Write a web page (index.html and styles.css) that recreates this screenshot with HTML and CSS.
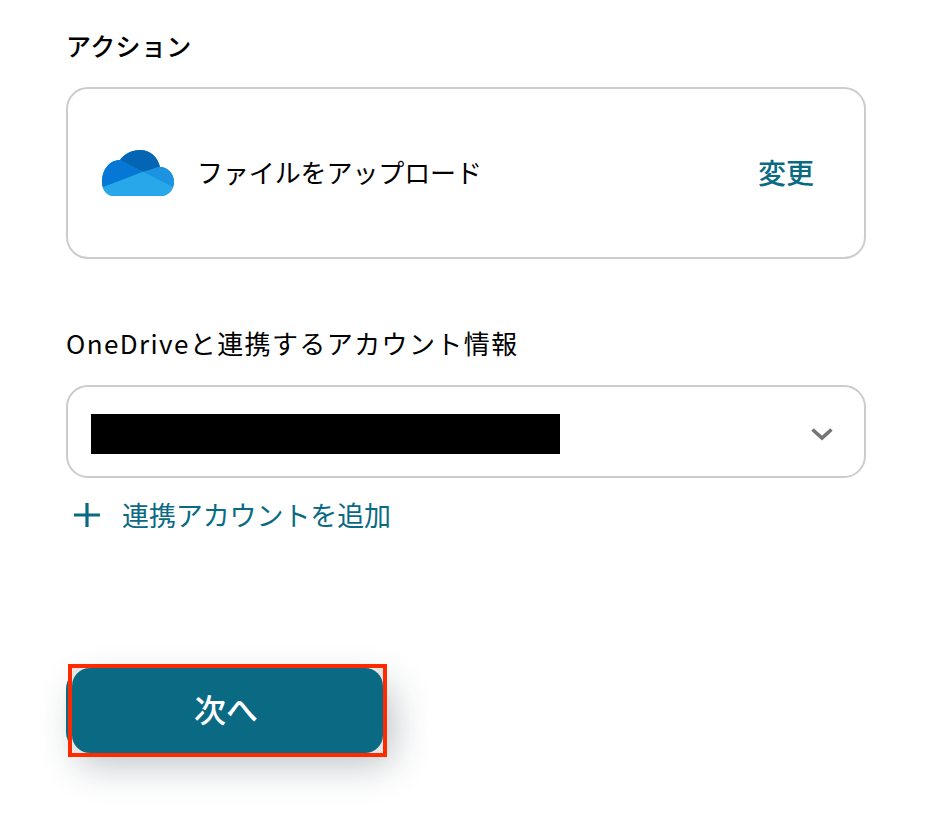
FILE: index.html
```html
<!DOCTYPE html>
<html lang="ja">

<head>
    <meta charset="UTF-8">
    <meta name="viewport" content="width=device-width, initial-scale=1.0">
    <title>アクション</title>
    <link rel="stylesheet" href="styles.css">
</head>

<body>
    <div class="main">
        <div class="label first">アクション</div>
        <div class="card">
            <svg class="cloud" viewBox="0 0 72 46" width="72" height="46">
                <defs>
                    <clipPath id="cloudShape">
                        <path d="M12 46C5 46 0 40 0 32C0 19 8 10 18 10C22 4 30 0 38 0C48 0 56 7 58 17C66 17 72 24 72 32C72 40 66 46 59 46Z" />
                    </clipPath>
                </defs>
                <g clip-path="url(#cloudShape)">
                    <rect width="72" height="46" fill="#1b93e0" />
                    <path d="M14 0H64V15L41 22L18 10Z" fill="#0465b4" />
                    <path d="M0 0H18V10L41 22L0 38Z" fill="#0478d4" />
                    <path d="M41 22L58 16.500L72 18V37Z" fill="#1b93e0" />
                    <path d="M41 21.700L0 37.500V46H72V37.500Z" fill="#28a8ea" />
                </g>
            </svg>
            <div class="card-title">ファイルをアップロード</div>
            <div class="change">変更</div>
        </div>

        <div class="label second">OneDriveと連携するアカウント情報</div>
        <div class="select">
            <div class="masked"></div>
            <svg class="chevron" viewBox="0 0 24 14" width="24" height="14">
                <path d="M2.500 2.500L12 11L21.500 2.500" fill="none" stroke="#757575" stroke-width="3.600" />
            </svg>
        </div>
        <div class="add">
            <svg class="plus" viewBox="0 0 26 26" width="26" height="26">
                <path d="M13 1V25M0 13H26" fill="none" stroke="#0b6a83" stroke-width="3.200" />
            </svg>
            <span>連携アカウントを追加</span>
        </div>

        <div class="next">
            <div class="next-mark">
                <div class="next-label">次へ</div>
            </div>
        </div>
    </div>
</body>

</html>
```

FILE: styles.css
```css
html,
body {
    width: 100%;
    height: 100%;
    background-color: #fff;
    color: #000;
    margin: 0;
    padding: 0;
    font-family: "Noto Sans CJK JP", "Noto Sans", sans-serif;
}

.main {
    box-sizing: border-box;
    width: 800px;
    margin-left: 66px;
    padding-top: 26px;
}

.label {
    font-size: 25px;
    line-height: 38px;
    font-weight: 500;
    letter-spacing: 0.4px;
}

.label.second {
    margin-top: 65px;
    font-size: 26px;
    font-weight: 400;
    letter-spacing: 1.400px;
}

.card {
    box-sizing: border-box;
    display: flex;
    align-items: center;
    height: 172px;
    margin-top: 23px;
    padding: 0 50px 0 34px;
    border: 2px solid #ccc;
    border-radius: 22px;
}

.cloud {
    flex: none;
}

.card-title {
    flex: 1;
    margin-left: 23px;
    font-size: 26px;
    line-height: 38px;
    margin-top: -2px;
    letter-spacing: -0.1px;
}

.change {
    color: #0b6a83;
    font-size: 28px;
    line-height: 38px;
    font-weight: 500;
    margin-top: -3px;
}

.select {
    box-sizing: border-box;
    display: flex;
    align-items: center;
    justify-content: space-between;
    height: 93px;
    margin-top: 23px;
    padding: 4px 30px 0 23px;
    border: 2px solid #ccc;
    border-radius: 22px;
}

.masked {
    width: 469px;
    height: 40px;
    background-color: #000;
}

.chevron {
    flex: none;
}

.add {
    display: flex;
    align-items: center;
    margin-top: 17px;
    padding-left: 8px;
    color: #0b6a83;
    font-size: 27px;
    line-height: 40px;
}

.add span {
    margin-left: 22px;
    letter-spacing: -0.1px;
}

.plus {
    flex: none;
}

.next {
    position: relative;
    width: 318px;
    height: 83px;
    margin-top: 134px;
    background-color: #0b6a83;
    border-radius: 20px;
    box-shadow: 10px 14px 36px rgba(30, 50, 60, 0.28);
}

.next-mark {
    position: absolute;
    left: 2px;
    top: -5px;
    box-sizing: border-box;
    width: 319px;
    height: 93px;
    border: 4.500px solid #ff2a00;
    background-color: #e4e6e6;
}

.next-label {
    height: 100%;
    background-color: #0b6a83;
    border-radius: 18px;
    color: #fff;
    font-size: 32px;
    font-weight: 500;
    line-height: 80px;
    text-align: center;
    padding-right: 3px;
    box-sizing: border-box;
}
```
